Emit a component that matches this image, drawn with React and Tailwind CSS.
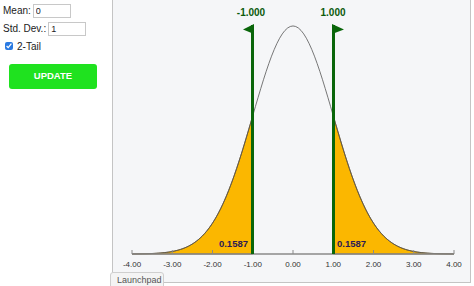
import React from 'react';

const X0 = 292;
const SX = 40.25;
const AXIS_Y = 254;
const SY = 571.6;

const pdf = (z) => Math.exp(-z * z / 2) / Math.sqrt(2 * Math.PI);
const px = (z) => X0 + SX * z;
const py = (z) => AXIS_Y - SY * pdf(z);

const curvePath = (from, to, steps = 120) => {
  let d = '';
  for (let i = 0; i <= steps; i++) {
    const z = from + ((to - from) * i) / steps;
    d += `${i === 0 ? 'M' : 'L'}${px(z).toFixed(2)},${py(z).toFixed(2)} `;
  }
  return d;
};

const tailPath = (from, to) =>
  `${curvePath(from, to, 60)} L${px(to)},${AXIS_Y} L${px(from)},${AXIS_Y} Z`;

const ticks = [-4, -3, -2, -1, 0, 1, 2, 3, 4];

const Chart = () => (
  <svg width="358" height="283" className="block" style={{ fontFamily: '"Liberation Sans", Arial, sans-serif' }}>
    <g transform="translate(-112,0)">
      <path d={tailPath(-4, -1)} fill="#fbb700" stroke="#6b4a10" strokeWidth="0.8" />
      <path d={tailPath(1, 4)} fill="#fbb700" stroke="#6b4a10" strokeWidth="0.8" />
      <path d={curvePath(-4, 4)} fill="none" stroke="#555" strokeWidth="0.8" />

      <line x1={131} y1={AXIS_Y} x2={453} y2={AXIS_Y} stroke="#8a8a8a" strokeWidth="1.5" />
      {ticks.map((t) => (
        <g key={t}>
          <line x1={px(t)} y1={AXIS_Y - 4} x2={px(t)} y2={AXIS_Y} stroke="#8a8a8a" strokeWidth="1" />
          <text x={px(t)} y={267} fontSize="8" fill="#333" textAnchor="middle">
            {t.toFixed(2)}
          </text>
        </g>
      ))}

      {/* cut-off markers */}
      <line x1={251.5} y1={25} x2={251.5} y2={AXIS_Y} stroke="#0a660a" strokeWidth="3" />
      <polygon points="253,24 242,29.5 253,34" fill="#0a660a" />
      <text x={250} y={16} fontSize="10" fontWeight="bold" fill="#0b5a0b" textAnchor="middle">-1.000</text>

      <line x1={332.5} y1={25} x2={332.5} y2={AXIS_Y} stroke="#0a660a" strokeWidth="3" />
      <polygon points="331,24 343,29.5 331,34" fill="#0a660a" />
      <text x={332} y={16} fontSize="10" fontWeight="bold" fill="#0b5a0b" textAnchor="middle">1.000</text>

      <text x={247} y={247} fontSize="9.5" fontWeight="bold" fill="#2b1a55" textAnchor="end">0.1587</text>
      <text x={336} y={247} fontSize="9.5" fontWeight="bold" fill="#2b1a55">0.1587</text>
    </g>
  </svg>
);

export default function App() {
  return (
    <div className="relative flex w-[474px] h-[286px] bg-white overflow-hidden text-[10px] text-[#222]" style={{ fontFamily: '"Liberation Sans", Arial, sans-serif' }}>
      <div className="w-[112px] shrink-0 pl-[3px] pt-[3px]">
        <div className="flex items-center gap-[2px] h-[15px]">
          <span>Mean:</span>
          <input
            defaultValue="0"
            className="w-[38px] h-[14px] border border-[#c8c8c8] px-[2px] text-[9px] outline-none"
          />
        </div>
        <div className="flex items-center gap-[2px] h-[15px] mt-[3px]">
          <span>Std. Dev.:</span>
          <input
            defaultValue="1"
            className="w-[38px] h-[14px] border border-[#c8c8c8] px-[2px] text-[9px] outline-none"
          />
        </div>
        <label className="flex items-center gap-[4px] h-[14px] mt-[3px] pl-[2px]">
          <input type="checkbox" defaultChecked className="w-[8px] h-[8px] accent-[#2a7ae2]" />
          <span>2-Tail</span>
        </label>
        <button className="mt-[11px] ml-[6px] w-[88px] h-[25px] rounded-[3px] bg-[#1fe21f] text-white text-[9.5px] font-bold">
          UPDATE
        </button>
      </div>
      <div className="h-[283px] w-[359px] border-l border-r border-b border-[#c4c4c4] bg-[#f5f6f8]">
        <Chart />
      </div>
      <div className="absolute left-[110px] top-[272px] w-[54px] h-[16px] pl-[6px] whitespace-nowrap border border-[#cfcfcf] rounded-t-[3px] bg-[#f4f4f4] text-[9px] text-[#555] leading-[14px]">
        Launchpad
      </div>
    </div>
  );
}
